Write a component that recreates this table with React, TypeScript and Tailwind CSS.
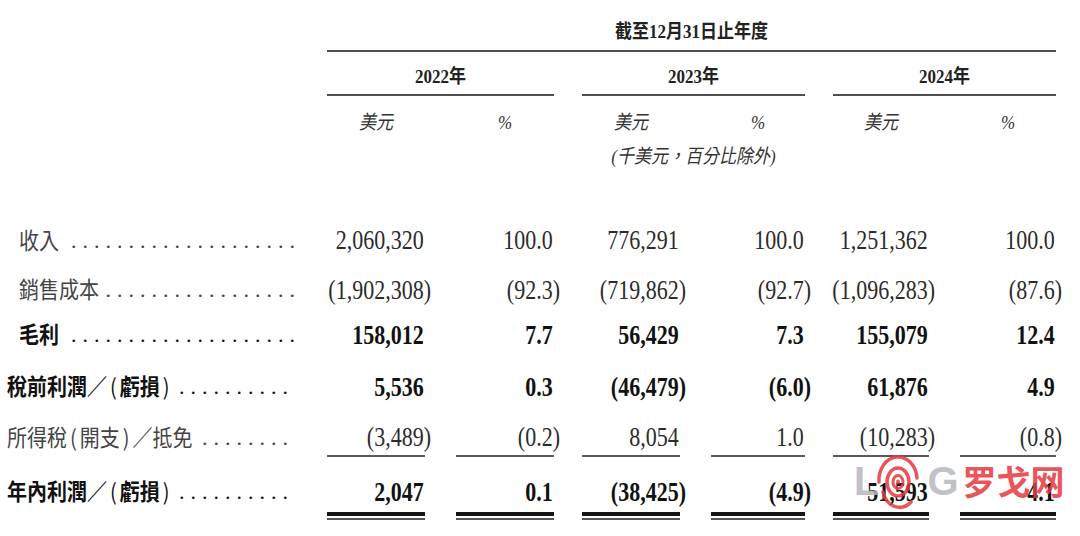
import React from 'react'

const grid =
  'grid grid-cols-[327px_98px_31px_98px_28px_98px_31px_94px_28px_96px_31px_96px]'

const font = { fontFamily: '"Liberation Serif", "Noto Sans CJK TC", serif' }
const cjk = { fontFamily: '"Noto Sans CJK TC", sans-serif' }

type Row = {
  label: string
  dots: number
  vals: string[]
  bold?: boolean
  indent?: boolean
  h: string
  underline?: boolean
}

const rows: Row[] = [
  { label: '收入', dots: 20, indent: true, h: 'h-[50px]', vals: ['2,060,320', '100.0', '776,291', '100.0', '1,251,362', '100.0'] },
  { label: '銷售成本', dots: 17, indent: true, h: 'h-[48px]', vals: ['(1,902,308)', '(92.3)', '(719,862)', '(92.7)', '(1,096,283)', '(87.6)'] },
  { label: '毛利', dots: 20, indent: true, bold: true, h: 'h-[42px]', vals: ['158,012', '7.7', '56,429', '7.3', '155,079', '12.4'] },
  { label: '稅前利潤／(虧損)', dots: 10, bold: true, h: 'h-[62px]', vals: ['5,536', '0.3', '(46,479)', '(6.0)', '61,876', '4.9'] },
  { label: '所得稅(開支)／抵免', dots: 8, h: 'h-[40px]', underline: true, vals: ['(3,489)', '(0.2)', '8,054', '1.0', '(10,283)', '(0.8)'] },
  { label: '年內利潤／(虧損)', dots: 10, bold: true, h: 'h-[55px] pt-[13px]', vals: ['2,047', '0.1', '(38,425)', '(4.9)', '51,593', '4.1'] },
]

// split the label so that the half-width brackets get a little air on each side
function Label({ text }: { text: string }) {
  const parts = text.split(/([()])/)
  return (
    <span className="inline-block scale-y-[1.12] whitespace-nowrap text-[20px]" style={cjk}>
      {parts.map((p, i) =>
        p === '(' || p === ')' ? (
          <span key={i} className="mx-[3px] font-normal">
            {p}
          </span>
        ) : (
          <React.Fragment key={i}>{p}</React.Fragment>
        ),
      )}
    </span>
  )
}

function Num({ v, underline }: { v: string; underline?: boolean }) {
  return (
    <div className={`flex items-center justify-end ${underline ? 'border-b-2 border-[#5a5a5a]' : ''}`}>
      <span className="-mr-[6px] inline-block scale-y-[1.2] whitespace-nowrap">
        {v}
        {!v.endsWith(')') && <span className="invisible">)</span>}
      </span>
    </div>
  )
}

function BodyRow({ row }: { row: Row }) {
  const [a, b, c, d, e, f] = row.vals
  return (
    <div
      className={`${grid} ${row.h} text-[22px] ${row.bold ? 'font-bold text-[#111]' : 'text-[#2b2b2b]'}`}
    >
      <div className={`flex items-center ${row.indent ? 'pl-[19px] pr-[26px]' : 'pl-[7px] pr-[33px]'}`}>
        <div className={`flex w-full items-baseline ${row.bold ? '' : 'text-[#444]'}`}>
          <Label text={row.label} />
          <span className="flex flex-1 justify-end whitespace-nowrap">
            <span className="tracking-[6px] font-normal">{'.'.repeat(row.dots)}</span>
          </span>
        </div>
      </div>
      <Num v={a} underline={row.underline} />
      <div />
      <Num v={b} underline={row.underline} />
      <div />
      <Num v={c} underline={row.underline} />
      <div />
      <Num v={d} underline={row.underline} />
      <div />
      <Num v={e} underline={row.underline} />
      <div />
      <Num v={f} underline={row.underline} />
    </div>
  )
}

function DoubleLine() {
  return (
    <div className="flex flex-col gap-[2px]">
      <div className="h-[4px] bg-[#151515]" />
      <div className="h-[2px] bg-[#555]" />
    </div>
  )
}

function Watermark() {
  return (
    <div className="pointer-events-none absolute left-[854px] top-[452px] flex items-center opacity-85">
      <span
        className="text-[40px] leading-none font-bold text-[#b4b8bd]"
        style={{ fontFamily: '"Liberation Sans", sans-serif' }}
      >
        L
      </span>
      <svg width="46" height="58" viewBox="0 0 46 58" className="-ml-[3px]">
        <g fill="none" stroke="#e5383f" strokeLinecap="round">
          <path d="M4 30 A19 23 0 0 1 42 26" strokeWidth="3.5" />
          <path d="M8 40 A17 20 0 0 0 36 50" strokeWidth="3.5" />
          <ellipse cx="23" cy="30" rx="11" ry="14" strokeWidth="3.5" />
          <ellipse cx="23" cy="30" rx="5" ry="6.5" strokeWidth="3" />
        </g>
        <ellipse cx="23" cy="30" rx="2" ry="2.5" fill="#e5383f" />
      </svg>
      <span
        className="ml-[6px] text-[40px] leading-none font-bold text-[#b4b8bd]"
        style={{ fontFamily: '"Liberation Sans", sans-serif' }}
      >
        G
      </span>
      <span
        className="ml-[4px] text-[34px] leading-none font-bold text-[#e5383f]"
        style={{ fontFamily: '"Noto Sans CJK SC", sans-serif' }}
      >
        罗戈网
      </span>
    </div>
  )
}

export default function App() {
  return (
    <div className="relative h-[536px] w-[1080px] overflow-hidden bg-white text-[#222]" style={font}>
      {/* column header */}
      <div className={`${grid} h-[50px]`}>
        <div />
        <div className="col-span-11 flex items-end justify-center pb-[8px] text-[17px] leading-[20px] font-bold">
          <span className="inline-block scale-y-[1.15]">截至12月31日止年度</span>
        </div>
      </div>
      <div className={grid}>
        <div />
        <div className="col-span-11 h-[2px] bg-[#4f4f4f]" />
      </div>

      <div className={`${grid} h-[42px] text-[17px] leading-[20px] font-bold`}>
        <div />
        <div className="col-span-3 pt-[15px] text-center">
          <span className="inline-block scale-y-[1.15]">2022年</span>
        </div>
        <div />
        <div className="col-span-3 pt-[15px] text-center">
          <span className="inline-block scale-y-[1.15]">2023年</span>
        </div>
        <div />
        <div className="col-span-3 pt-[15px] text-center">
          <span className="inline-block scale-y-[1.15]">2024年</span>
        </div>
      </div>
      <div className={grid}>
        <div />
        <div className="col-span-3 h-[2px] bg-[#4f4f4f]" />
        <div />
        <div className="col-span-3 h-[2px] bg-[#4f4f4f]" />
        <div />
        <div className="col-span-3 h-[2px] bg-[#4f4f4f]" />
      </div>

      <div className={`${grid} h-[50px] pt-[4px] text-[17px] italic text-[#333]`}>
        <div />
        {[0, 1, 2].map((i) => (
          <React.Fragment key={i}>
            <div className="flex items-center justify-center">
              <span className="inline-block scale-y-[1.15]">美元</span>
            </div>
            <div />
            <div className="flex items-center justify-center">
              <span className="inline-block scale-y-[1.15]">%</span>
            </div>
            {i < 2 && <div />}
          </React.Fragment>
        ))}
      </div>
      <div className={`${grid} h-[22px] text-[17px] leading-[22px] italic text-[#333]`}>
        <div />
        <div className="col-start-6 col-span-3 text-center whitespace-nowrap">
          <span className="inline-block scale-y-[1.15]">(千美元，百分比除外)</span>
        </div>
      </div>

      <div className="h-[47px]" />

      {rows.map((r) => (
        <BodyRow key={r.label} row={r} />
      ))}

      <div className={grid}>
        <div />
        <DoubleLine />
        <div />
        <DoubleLine />
        <div />
        <DoubleLine />
        <div />
        <DoubleLine />
        <div />
        <DoubleLine />
        <div />
        <DoubleLine />
      </div>

      <Watermark />
    </div>
  )
}
